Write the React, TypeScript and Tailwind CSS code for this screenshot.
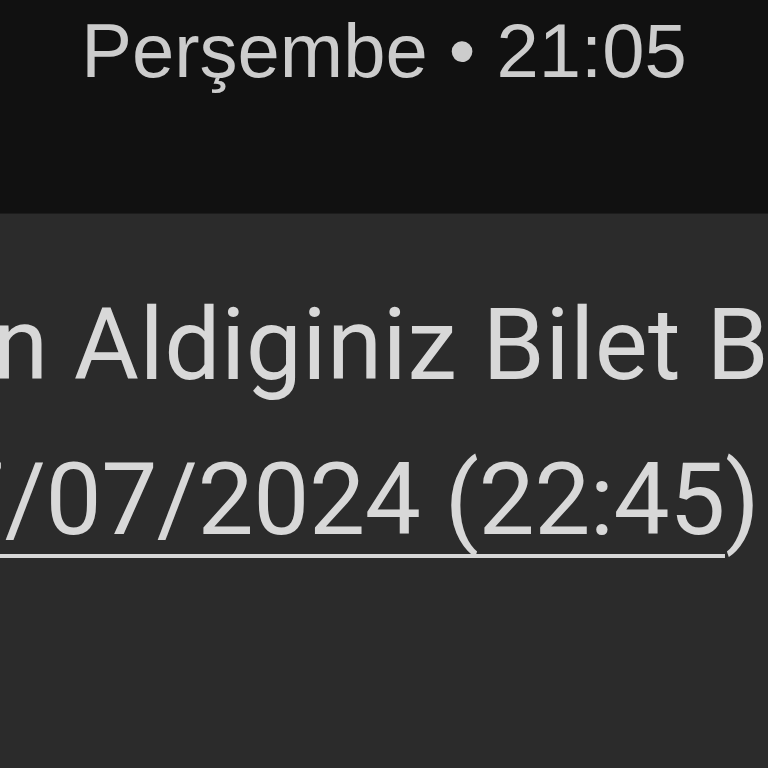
export default function App() {
  return (
    <div className="w-[768px] h-[768px] overflow-hidden flex flex-col bg-[#2b2b2b]">
      <div className="h-[214px] bg-[#111111] border-b border-[#1c1c1c] flex justify-center pt-[13px]">
        <p className="font-['Liberation_Sans',Arial,sans-serif] text-[76px] leading-none text-[#cccccc] whitespace-nowrap">
          Perşembe • 21:05
        </p>
      </div>
      <div className="flex-1 pt-[53px] font-['Roboto',sans-serif] text-[100px] leading-[155px] text-[#d8d8d8] whitespace-nowrap">
        <p className="ml-[-7px] tracking-[0.4px]">n Aldiginiz Bilet Bilgileri</p>
        <p className="ml-[-51px] tracking-[-0.5px]">
          <span className="underline decoration-[4px] underline-offset-[20px] [text-decoration-skip-ink:none]">7/07/2024 (22:45</span>)
        </p>
      </div>
    </div>
  );
}
